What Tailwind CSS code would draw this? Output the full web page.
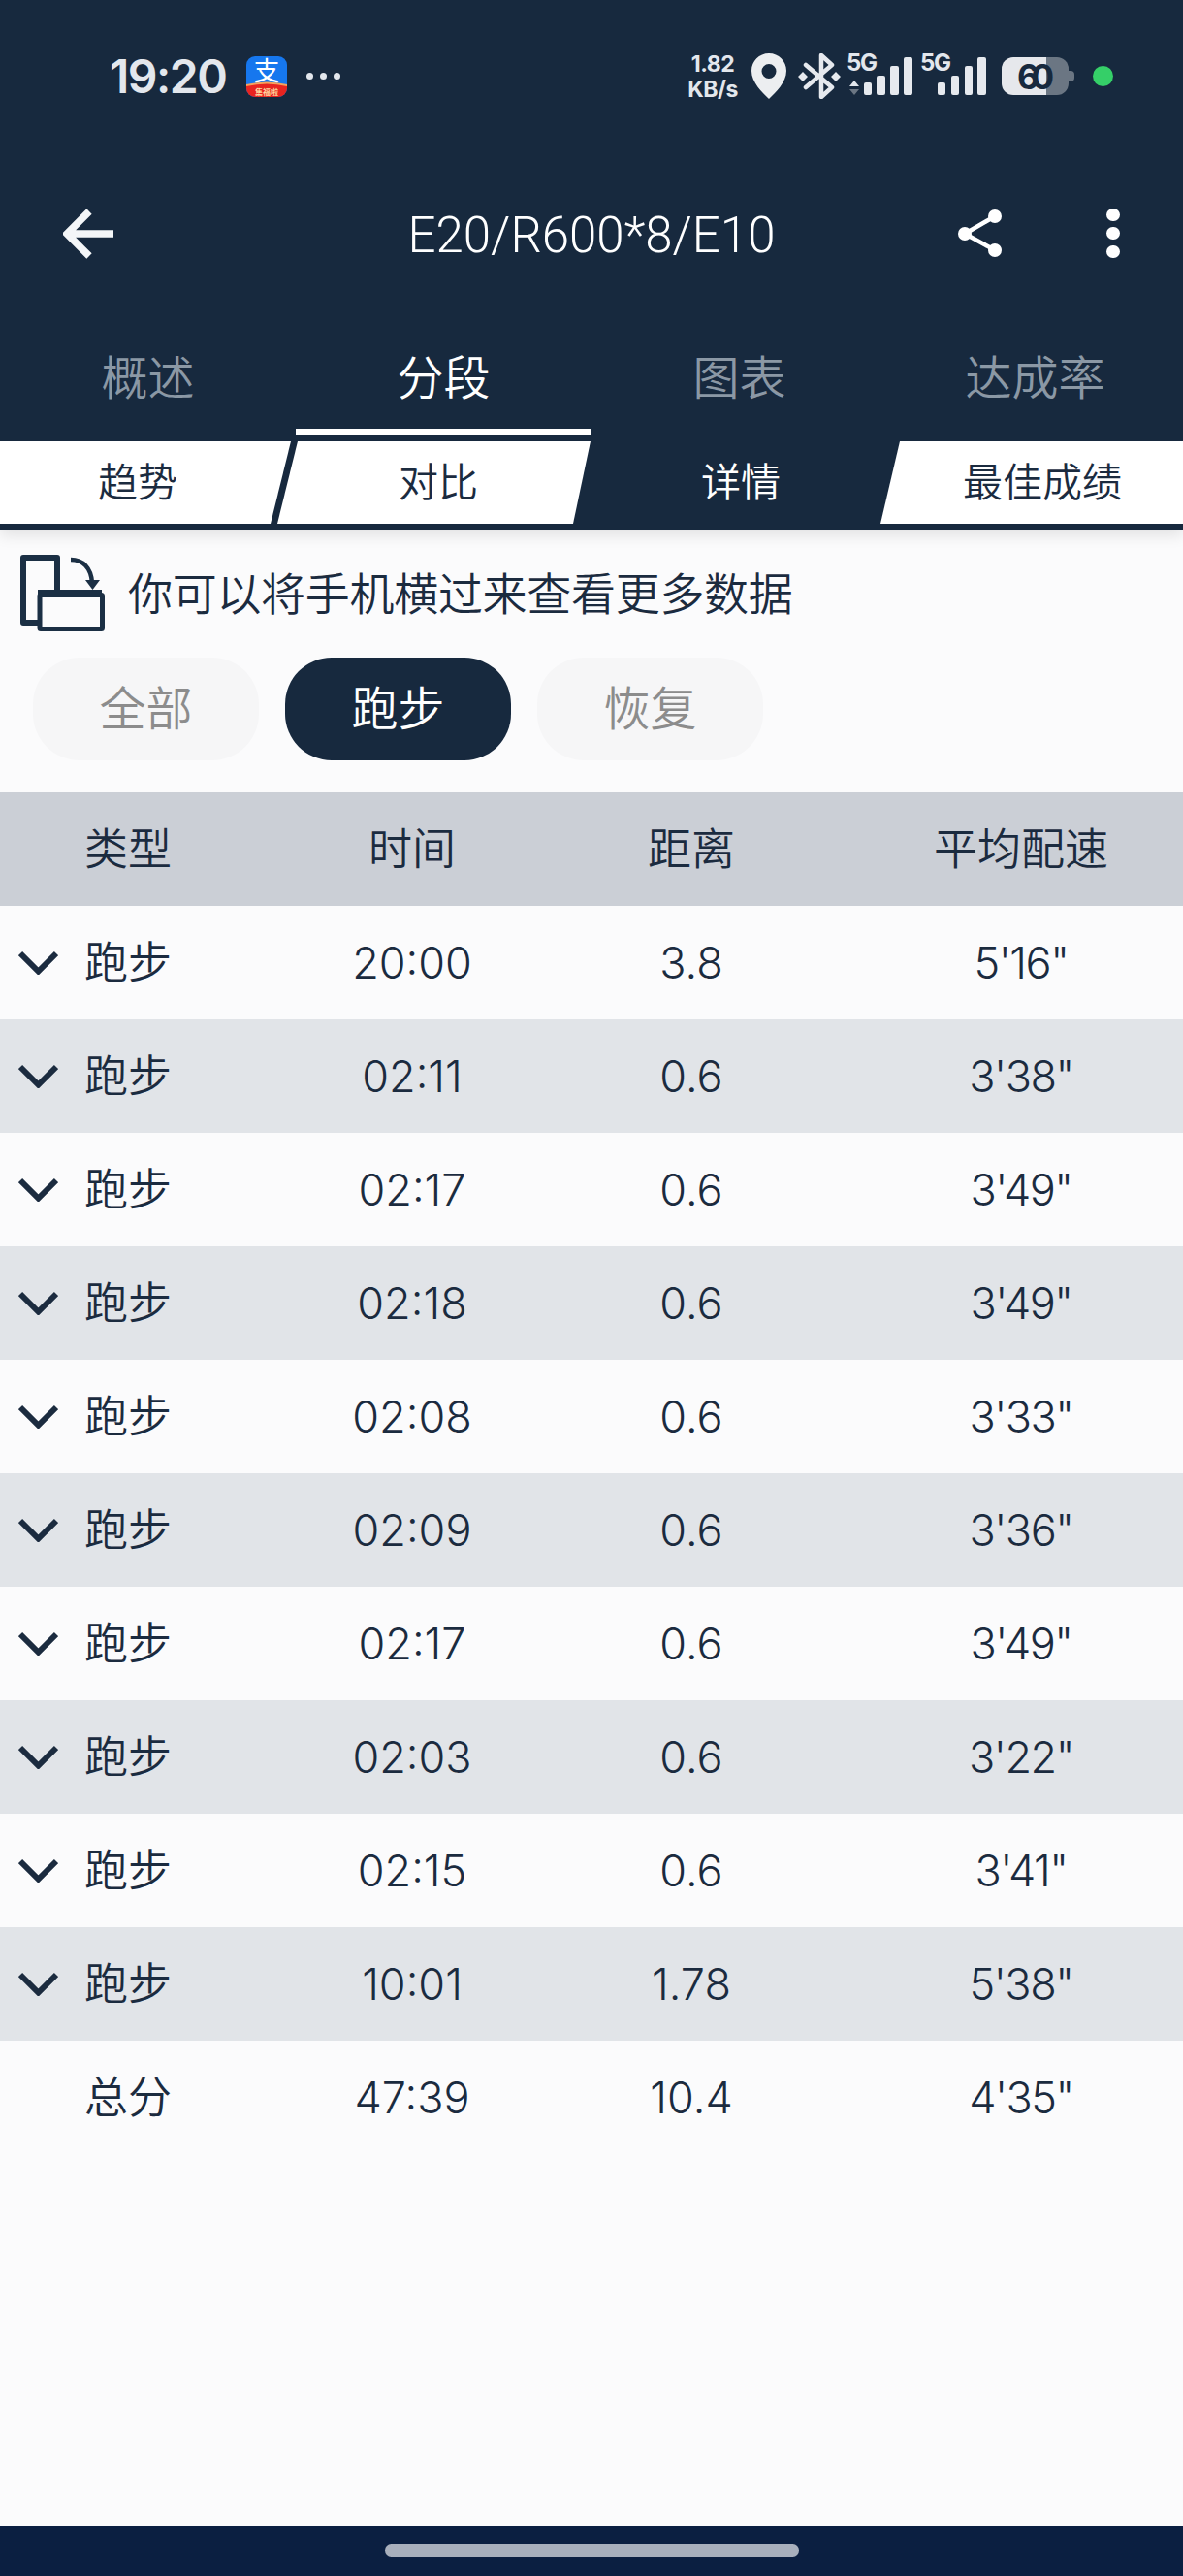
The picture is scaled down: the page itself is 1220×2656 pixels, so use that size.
<!DOCTYPE html>
<html lang="zh">
<head>
<meta charset="utf-8">
<script src="https://cdn.jsdelivr.net/npm/@tailwindcss/browser@4"></script>
<title>E20/R600*8/E10</title>
</head>
<body class="m-0">
<div class="w-[1220px] h-[2656px] flex flex-col bg-[#fbfbfc] overflow-hidden text-[#1b2b3f] font-[350] [font-family:Inter,'Noto_Sans_CJK_SC',sans-serif]">

  <header class="relative z-10 bg-[#17293e] shadow-[0_6px_14px_rgba(0,0,0,0.10)]">
    <!-- status bar -->
    <div class="flex items-center justify-between h-[47px] mt-[55px] pl-[113px] pr-[72px]">
      <div class="flex items-center">
        <span class="text-[48px] leading-[47px] font-semibold tracking-[-1.5px] text-[#e3e7ed] w-[141px]">19:20</span>
        <svg class="w-[42px] h-[58px] my-[-8px]" viewBox="0 -8 42 58">
          <rect width="42" height="42" rx="9" fill="#1677ee"/>
          <path d="M0 30q21 -5 42 0v3a9 9 0 0 1 -9 9h-24a9 9 0 0 1 -9 -9z" fill="#e8241f"/>
          <path d="M0 29q21 -5 42 0v2q-21 -5 -42 0z" fill="#f5a25d"/>
          <text x="21" y="25" text-anchor="middle" font-size="27" font-weight="400" fill="#fff" font-family="Noto Sans CJK SC">支</text>
          <text x="21" y="39.5" text-anchor="middle" font-size="8" font-weight="700" fill="#ffd9a0" font-family="Noto Sans CJK SC">集福啦</text>
        </svg>
        <div class="flex gap-[7px] ml-[20px]">
          <span class="w-[7px] h-[7px] rounded-full bg-[#e3e7ed]"></span>
          <span class="w-[7px] h-[7px] rounded-full bg-[#e3e7ed]"></span>
          <span class="w-[7px] h-[7px] rounded-full bg-[#e3e7ed]"></span>
        </div>
      </div>
      <div class="flex items-center">
        <div class="w-[54px] text-center text-[23px] leading-[26px] font-bold text-[#e3e7ed] tracking-[-0.5px]">1.82<br>KB/s</div>
        <svg class="ml-[13px] w-[36px] h-[47px]" viewBox="0 0 36 47">
          <path fill-rule="evenodd" d="M18 0C8 0 0 8 0 18c0 12 11 22 18 29 7-7 18-17 18-29C36 8 28 0 18 0zm0 11a7.500 7.500 0 1 1 0 15 7.500 7.500 0 0 1 0-15z" fill="#eceef0"/>
        </svg>
        <svg class="ml-[12px] w-[44px] h-[47px]" viewBox="0 0 44 47">
          <path d="M8 12l27 23-11 10V2l11 10L8 35" fill="none" stroke="#e6e9ee" stroke-width="4.500" stroke-linejoin="round" stroke-linecap="round"/>
          <path d="M5 19l5 5-5 5-5-5zM39 19l5 5-5 5-5-5z" fill="#e6e9ee"/>
        </svg>
        <svg class="ml-[6px] w-[68px] h-[59px] my-[-6px]" viewBox="0 -6 68 59">
          <text x="0" y="18" font-size="24" font-weight="700" fill="#e3e7ed" font-family="Inter" textLength="32">5G</text>
          <path d="M8 28l5 6H3z" fill="#e3e7ed"/>
          <path d="M8 43l5-6H3z" fill="#6b7683"/>
          <rect x="18" y="30" width="8" height="13" rx="2" fill="#e6e9ee"/>
          <rect x="31" y="23" width="9" height="20" rx="2" fill="#e6e9ee"/>
          <rect x="45" y="13" width="9" height="30" rx="2" fill="#e6e9ee"/>
          <rect x="59" y="4" width="9" height="39" rx="2" fill="#e6e9ee"/>
        </svg>
        <svg class="ml-[8px] w-[68px] h-[59px] my-[-6px]" viewBox="0 -6 68 59">
          <text x="0" y="18" font-size="24" font-weight="700" fill="#e3e7ed" font-family="Inter" textLength="32">5G</text>
          <rect x="18" y="30" width="8" height="13" rx="2" fill="#e6e9ee"/>
          <rect x="32" y="23" width="8" height="20" rx="2" fill="#e6e9ee"/>
          <rect x="46" y="13" width="8" height="30" rx="2" fill="#e6e9ee"/>
          <rect x="59" y="4" width="9" height="39" rx="2" fill="#e6e9ee"/>
        </svg>
        <svg class="ml-[16px] w-[75px] h-[47px]" viewBox="0 0 75 47">
          <path d="M46 4h11a12 12 0 0 1 12 12v15a12 12 0 0 1 -12 12h-11z" fill="#6b7683"/>
          <path d="M69 18h2a4 4 0 0 1 4 4v3a4 4 0 0 1 -4 4h-2z" fill="#6b7683"/>
          <path d="M46 4h-34a12 12 0 0 0 -12 12v15a12 12 0 0 0 12 12h34z" fill="#e6e8ec"/>
          <text x="35" y="37" text-anchor="middle" font-size="35" font-weight="700" fill="#17293e" font-family="Inter" textLength="38">60</text>
        </svg>
        <span class="ml-[19px] w-[21px] h-[21px] rounded-full bg-[#35cf68]"></span>
      </div>
    </div>

    <!-- toolbar -->
    <div class="grid grid-cols-[1fr_auto_1fr] items-center h-[120px] mt-[78px]">
      <div class="pl-[65px] pt-[1px]">
        <svg class="w-[52px] h-[52px]" viewBox="0 0 52 52">
          <path d="M52 26H5M27 3L4 26l23 23" fill="none" stroke="#f4f6f8" stroke-width="7.500"/>
        </svg>
      </div>
      <div class="pt-[5px] text-[51px] leading-[60px] font-light text-white [font-family:Roboto,sans-serif]">E20/R600*8/E10</div>
      <div class="flex items-center justify-end pr-[65px]">
        <svg class="w-[45px] h-[49px]" viewBox="0 0 45 49">
          <path d="M38 7L7 25l31 17" fill="none" stroke="#fff" stroke-width="4.500"/>
          <circle cx="38" cy="7" r="7" fill="#fff"/>
          <circle cx="7" cy="25" r="7" fill="#fff"/>
          <circle cx="38" cy="42" r="7" fill="#fff"/>
        </svg>
        <div class="flex flex-col gap-[6px] ml-[108px]">
          <span class="w-[14px] h-[13px] rounded-full bg-white"></span>
          <span class="w-[14px] h-[13px] rounded-full bg-white"></span>
          <span class="w-[14px] h-[13px] rounded-full bg-white"></span>
        </div>
      </div>
    </div>

    <!-- main tabs -->
    <nav class="grid grid-cols-4 h-[155px] text-[48px] leading-[60px] text-center text-[#8b98a5]">
      <div class="pt-[60px]">概述<div class="mt-[22px] h-[7px]"></div></div>
      <div class="pt-[60px] text-white">分段<div class="mt-[22px] h-[7px] bg-white"></div></div>
      <div class="pt-[60px]">图表<div class="mt-[22px] h-[7px]"></div></div>
      <div class="pt-[60px]">达成率<div class="mt-[22px] h-[7px]"></div></div>
    </nav>

    <!-- sub tabs -->
    <div class="flex h-[85px] mb-[6px] text-[41px] leading-[85px] text-center">
      <div class="w-[300px] pr-[16px] bg-white [clip-path:polygon(0_0,100%_0,279px_100%,0_100%)]">趋势</div>
      <div class="w-[323px] ml-[-14px] pl-[9px] bg-white [clip-path:polygon(21px_0,100%_0,305px_100%,0_100%)]">对比</div>
      <div class="w-[337px] ml-[-18px] pl-[9px] text-white">详情</div>
      <div class="w-[312px] ml-[-20px] pl-[22px] bg-white [clip-path:polygon(20px_0,100%_0,100%_100%,0_100%)]">最佳成绩</div>
    </div>
  </header>

  <!-- hint -->
  <div class="flex items-center h-[79px] mt-[26px] pl-[21px]">
    <svg class="w-[87px] h-[79px]" viewBox="0 0 87 79">
      <path d="M3 0h35a3 3 0 0 1 3 3v67a3 3 0 0 1 -3 3H3a3 3 0 0 1 -3 -3V3a3 3 0 0 1 3 -3z M6 6v61h29V6z" fill="#1b2f44" fill-rule="evenodd"/>
      <rect x="20" y="41.500" width="64.500" height="35" rx="1" fill="#fbfbfc" stroke="#1b2f44" stroke-width="5"/>
      <path d="M18 39h66" stroke="#1b2f44" stroke-width="6"/>
      <path d="M52 5c12 0 21 8 22 24" fill="none" stroke="#1b2f44" stroke-width="4.500"/>
      <path d="M67 26h15l-7.500 10z" fill="#1b2f44"/>
    </svg>
    <span class="ml-[24px] text-[46px] leading-[60px] tracking-[-0.3px]">你可以将手机横过来查看更多数据</span>
  </div>

  <!-- filter pills -->
  <div class="flex gap-[27px] h-[106px] mt-[27px] pl-[34px] text-[48px] leading-[106px] text-center">
    <div class="w-[233px] rounded-[48px] bg-[#f6f6f7] text-[#8c8c8c]">全部</div>
    <div class="w-[233px] rounded-[48px] bg-[#17293e] text-white">跑步</div>
    <div class="w-[233px] rounded-[48px] bg-[#f6f6f7] text-[#8c8c8c]">恢复</div>
  </div>

  <!-- table -->
  <div class="mt-[33px] text-[45px] text-center">
    <div class="grid grid-cols-[310px_230px_346px_334px] items-center h-[117px] bg-[#cbcfd6]"><div class="pl-[87px] text-left">类型</div><div>时间</div><div>距离</div><div>平均配速</div></div>

    <div class="grid grid-cols-[310px_230px_346px_334px] items-center h-[117px] bg-[#fbfbfc]"><div class="flex items-center pl-[19px]"><svg class="w-[41px] h-[25px]" viewBox="0 0 41 25"><path d="M2 3l18.500 18.500L39 3" fill="none" stroke="#1b2b3f" stroke-width="6"/></svg><span class="ml-[27px]">跑步</span></div><div class="font-light">20:00</div><div class="font-light">3.8</div><div class="font-light tracking-[-1.5px]">5'16"</div></div>
    <div class="grid grid-cols-[310px_230px_346px_334px] items-center h-[117px] bg-[#e1e4e8]"><div class="flex items-center pl-[19px]"><svg class="w-[41px] h-[25px]" viewBox="0 0 41 25"><path d="M2 3l18.500 18.500L39 3" fill="none" stroke="#1b2b3f" stroke-width="6"/></svg><span class="ml-[27px]">跑步</span></div><div class="font-light">02:11</div><div class="font-light">0.6</div><div class="font-light tracking-[-1.5px]">3'38"</div></div>
    <div class="grid grid-cols-[310px_230px_346px_334px] items-center h-[117px] bg-[#fbfbfc]"><div class="flex items-center pl-[19px]"><svg class="w-[41px] h-[25px]" viewBox="0 0 41 25"><path d="M2 3l18.500 18.500L39 3" fill="none" stroke="#1b2b3f" stroke-width="6"/></svg><span class="ml-[27px]">跑步</span></div><div class="font-light">02:17</div><div class="font-light">0.6</div><div class="font-light tracking-[-1.5px]">3'49"</div></div>
    <div class="grid grid-cols-[310px_230px_346px_334px] items-center h-[117px] bg-[#e1e4e8]"><div class="flex items-center pl-[19px]"><svg class="w-[41px] h-[25px]" viewBox="0 0 41 25"><path d="M2 3l18.500 18.500L39 3" fill="none" stroke="#1b2b3f" stroke-width="6"/></svg><span class="ml-[27px]">跑步</span></div><div class="font-light">02:18</div><div class="font-light">0.6</div><div class="font-light tracking-[-1.5px]">3'49"</div></div>
    <div class="grid grid-cols-[310px_230px_346px_334px] items-center h-[117px] bg-[#fbfbfc]"><div class="flex items-center pl-[19px]"><svg class="w-[41px] h-[25px]" viewBox="0 0 41 25"><path d="M2 3l18.500 18.500L39 3" fill="none" stroke="#1b2b3f" stroke-width="6"/></svg><span class="ml-[27px]">跑步</span></div><div class="font-light">02:08</div><div class="font-light">0.6</div><div class="font-light tracking-[-1.5px]">3'33"</div></div>
    <div class="grid grid-cols-[310px_230px_346px_334px] items-center h-[117px] bg-[#e1e4e8]"><div class="flex items-center pl-[19px]"><svg class="w-[41px] h-[25px]" viewBox="0 0 41 25"><path d="M2 3l18.500 18.500L39 3" fill="none" stroke="#1b2b3f" stroke-width="6"/></svg><span class="ml-[27px]">跑步</span></div><div class="font-light">02:09</div><div class="font-light">0.6</div><div class="font-light tracking-[-1.5px]">3'36"</div></div>
    <div class="grid grid-cols-[310px_230px_346px_334px] items-center h-[117px] bg-[#fbfbfc]"><div class="flex items-center pl-[19px]"><svg class="w-[41px] h-[25px]" viewBox="0 0 41 25"><path d="M2 3l18.500 18.500L39 3" fill="none" stroke="#1b2b3f" stroke-width="6"/></svg><span class="ml-[27px]">跑步</span></div><div class="font-light">02:17</div><div class="font-light">0.6</div><div class="font-light tracking-[-1.5px]">3'49"</div></div>
    <div class="grid grid-cols-[310px_230px_346px_334px] items-center h-[117px] bg-[#e1e4e8]"><div class="flex items-center pl-[19px]"><svg class="w-[41px] h-[25px]" viewBox="0 0 41 25"><path d="M2 3l18.500 18.500L39 3" fill="none" stroke="#1b2b3f" stroke-width="6"/></svg><span class="ml-[27px]">跑步</span></div><div class="font-light">02:03</div><div class="font-light">0.6</div><div class="font-light tracking-[-1.5px]">3'22"</div></div>
    <div class="grid grid-cols-[310px_230px_346px_334px] items-center h-[117px] bg-[#fbfbfc]"><div class="flex items-center pl-[19px]"><svg class="w-[41px] h-[25px]" viewBox="0 0 41 25"><path d="M2 3l18.500 18.500L39 3" fill="none" stroke="#1b2b3f" stroke-width="6"/></svg><span class="ml-[27px]">跑步</span></div><div class="font-light">02:15</div><div class="font-light">0.6</div><div class="font-light tracking-[-1.5px]">3'41"</div></div>
    <div class="grid grid-cols-[310px_230px_346px_334px] items-center h-[117px] bg-[#e1e4e8]"><div class="flex items-center pl-[19px]"><svg class="w-[41px] h-[25px]" viewBox="0 0 41 25"><path d="M2 3l18.500 18.500L39 3" fill="none" stroke="#1b2b3f" stroke-width="6"/></svg><span class="ml-[27px]">跑步</span></div><div class="font-light">10:01</div><div class="font-light">1.78</div><div class="font-light tracking-[-1.5px]">5'38"</div></div>
    <div class="grid grid-cols-[310px_230px_346px_334px] items-center h-[117px] bg-[#fbfbfc]"><div class="pl-[87px] text-left">总分</div><div class="font-light">47:39</div><div class="font-light">10.4</div><div class="font-light tracking-[-1.5px]">4'35"</div></div>
  </div>

  <!-- navigation bar -->
  <div class="mt-auto h-[52px] pt-[19px] bg-[#0b1f41]">
    <div class="w-[427px] h-[13px] mx-auto rounded-full bg-[#a8afbc]"></div>
  </div>
</div>
</body>
</html>
